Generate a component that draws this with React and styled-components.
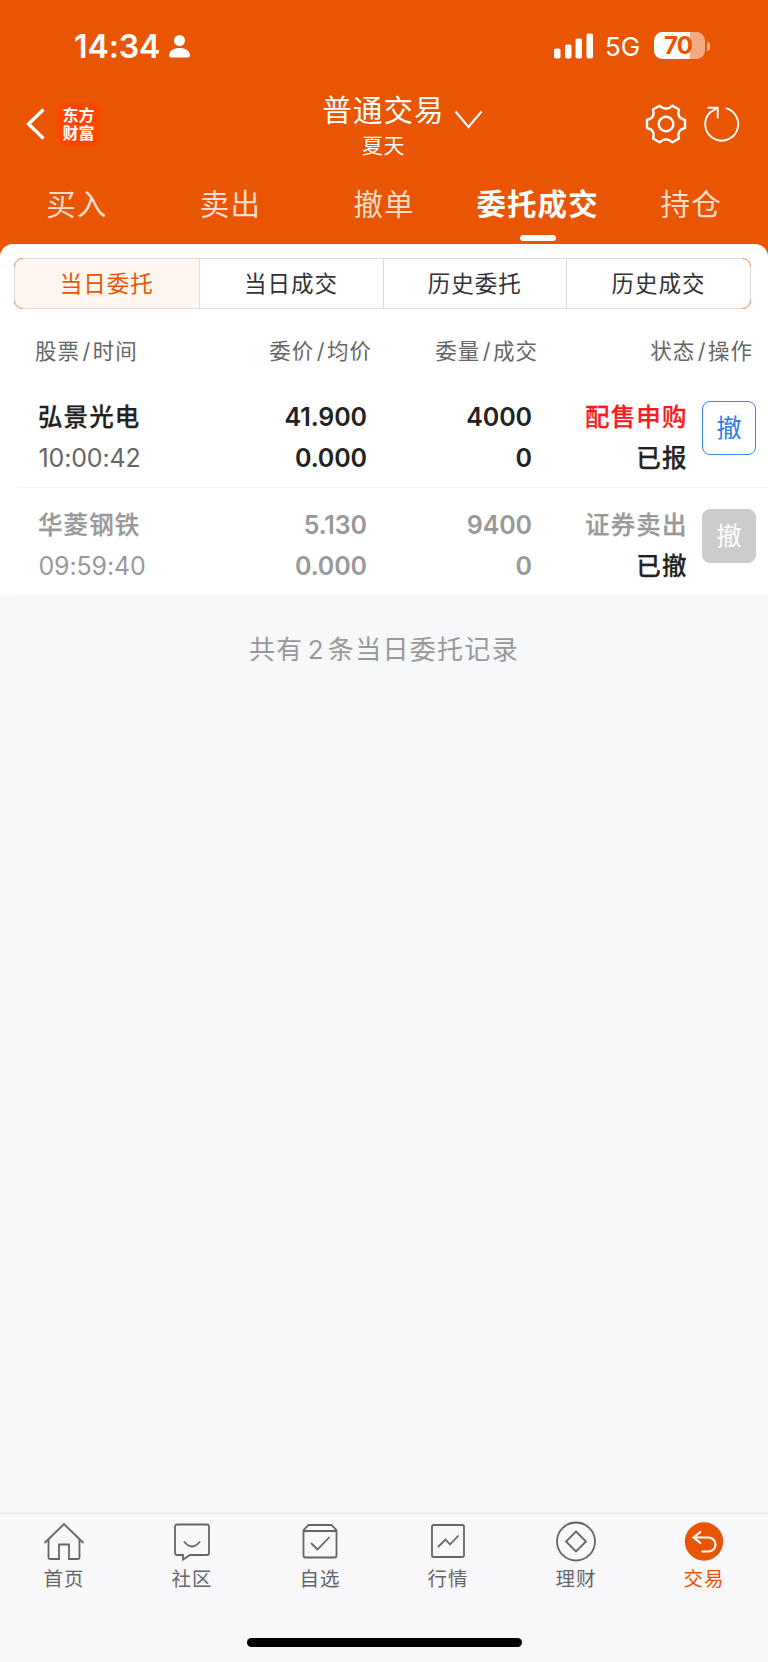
import React from "react";
import styled, { createGlobalStyle } from "styled-components";

const ORANGE = "#ea5504";

const GlobalStyle = createGlobalStyle`
  * { box-sizing: border-box; }
  body {
    margin: 0;
    background: #f7f8fa;
    font-family: Inter, "Noto Sans CJK SC", sans-serif;
  }
`;

const Screen = styled.div`
  width: 768px;
  height: 1662px;
  display: flex;
  flex-direction: column;
  overflow: hidden;
  white-space: nowrap;
  background: #f7f8fa;
`;

const Header = styled.header`
  height: 256px;
  flex: none;
  background: ${ORANGE};
  color: #fff;
`;

const StatusBar = styled.div`
  height: 92px;
  padding: 0 58px 0 74px;
  display: flex;
  align-items: center;
  justify-content: space-between;
`;

const StatusGroup = styled.div`
  display: flex;
  align-items: center;
`;

const Clock = styled.span`
  width: 95px;
  font-size: 32px;
  font-weight: 600;
  line-height: 40px;
  letter-spacing: -0.1px;
  padding-top: 1px;
`;

const Network = styled.span`
  width: 49px;
  margin-left: 11px;
  font-size: 26px;
  line-height: 34px;
  padding-top: 2px;
`;

const Battery = styled.div`
  width: 51px;
  height: 27px;
  margin-top: -1px;
  border-radius: 8.5px;
  text-align: center;
  font-size: 24px;
  font-weight: 700;
  line-height: 28px;
  padding-right: 3px;
  letter-spacing: -0.8px;
  color: ${ORANGE};
  background: linear-gradient(90deg, #fff 70%, #f5aa83 70%);
`;

const BatteryTip = styled.div`
  width: 3px;
  height: 9px;
  margin-left: 2px;
  border-radius: 0 4px 4px 0;
  background: #f5aa83;
`;

const NavBar = styled.div`
  height: 69px;
  margin-top: -3px;
  padding: 0 26px 0 24px;
  display: grid;
  grid-template-columns: 1fr auto 1fr;
  grid-template-rows: 70px;
  align-items: center;
`;

const NavLeft = styled.div`
  display: flex;
  align-items: center;
  gap: 9px;
`;

const Logo = styled.div`
  width: 43px;
  height: 43px;
  padding-top: 4.5px;
  border-radius: 9px;
  background: #ff4502;
  text-align: center;
  font-size: 16px;
  font-weight: 700;
  line-height: 17.5px;
`;

const Account = styled.div`
  display: flex;
  flex-direction: column;
  align-items: center;
  align-self: start;
  padding: 2px 0 0 1px;
`;

const AccountTitle = styled.div`
  font-size: 29.5px;
  letter-spacing: 1.1px;
  line-height: 38px;
  position: relative;
  svg {
    position: absolute;
    left: 131px;
    top: 18px;
  }
`;

const AccountName = styled.div`
  font-size: 21px;
  letter-spacing: 0.6px;
  line-height: 28px;
  margin-top: 3px;
`;

const NavRight = styled.div`
  display: flex;
  justify-content: flex-end;
  align-items: center;
  gap: 15px;
`;

const Tabs = styled.nav`
  height: 86px;
  display: grid;
  grid-template-columns: repeat(5, 1fr);
`;

const Tab = styled.div`
  display: flex;
  flex-direction: column;
  align-items: center;
  padding-top: 25px;
  font-size: 29.5px;
  line-height: 42px;
  letter-spacing: 1.1px;
  font-weight: ${(p) => (p.$active ? 700 : 400)};
  color: ${(p) => (p.$active ? "#fff" : "#fbdccb")};
  &::after {
    content: "";
    width: 36px;
    height: 6px;
    margin-top: 10px;
    border-radius: 3px;
    background: ${(p) => (p.$active ? "#fff" : "transparent")};
  }
`;

const Panel = styled.section`
  height: 351px;
  flex: none;
  margin-top: -12px;
  padding-top: 14px;
  border-radius: 13px 13px 0 0;
  background: #fff;
`;

const Segments = styled.div`
  height: 51px;
  margin: 0 17px 0 14px;
  border: 1px solid #dcdce2;
  border-radius: 8px;
  display: grid;
  grid-template-columns: repeat(4, 1fr);
  position: relative;
`;

const CornerLines = styled.svg`
  position: absolute;
  left: -1px;
  top: -1px;
`;

const Segment = styled.div`
  text-align: center;
  font-size: 22.5px;
  line-height: 49px;
  letter-spacing: 1px;
  color: ${(p) => (p.$active ? ORANGE : "#333")};
  background: ${(p) => (p.$active ? "#fff5f1" : "transparent")};
  border-radius: ${(p) => (p.$active ? "7px 0 0 7px" : "0")};
  & + & {
    border-left: 1px solid #dcdce2;
  }
`;

const ColumnTitles = styled.div`
  height: 72px;
  padding: 12px 15px 0 35px;
  display: grid;
  grid-template-columns: 189px 148px 166px 1fr;
  font-size: 21.5px;
  line-height: 60px;
  letter-spacing: 1px;
  color: #666;
`;

const ColumnTitle = styled.span`
  text-align: ${(p) => (p.$first ? "left" : "right")};
  i {
    font-style: normal;
    padding: 0 1.5px 0 2.5px;
  }
`;

const Order = styled.article`
  height: 107px;
  margin-left: 18px;
  padding: 16px 12px 0 21px;
  display: grid;
  grid-template-columns: 180px 148px 165px 154px 1fr;
  border-bottom: 1px solid #f3f3f5;
  color: ${(p) => (p.$cancelled ? "#999" : "#222")};
  & + & {
    height: 108px;
    padding-top: 17px;
  }
`;

const Cell = styled.div`
  display: flex;
  flex-direction: column;
  align-items: ${(p) => (p.$left ? "flex-start" : "flex-end")};
`;

const StockName = styled.div`
  font-size: 24.5px;
  font-weight: 500;
  letter-spacing: 1.1px;
  line-height: 41px;
  -webkit-text-stroke: 0.25px currentColor;
  margin-left: -1px;
`;

const Time = styled.div`
  font-size: 25px;
  letter-spacing: -0.15px;
  line-height: 40px;
  margin-left: -0.5px;
  color: ${(p) => (p.$cancelled ? "#999" : "#666")};
`;

const Figure = styled.div`
  font-size: 25px;
  font-weight: 600;
  line-height: 41px;
  letter-spacing: -0.1px;
`;

const Status = styled(StockName)`
  margin-right: -1.5px;
  color: ${(p) => p.$color};
`;

const CancelButton = styled.button`
  justify-self: end;
  width: 54px;
  height: 54px;
  margin-top: 4px;
  padding: 0;
  border-radius: 8px;
  border: 1px solid ${(p) => (p.$disabled ? "#ccc" : "#3a87ea")};
  background: ${(p) => (p.$disabled ? "#ccc" : "#fff")};
  color: ${(p) => (p.$disabled ? "#fff" : "#2b7de5")};
  font: 400 25px/53px Inter, "Noto Sans CJK SC", sans-serif;
`;

const Summary = styled.p`
  flex: 1;
  margin: 0;
  padding-top: 34px;
  text-align: center;
  font-size: 26px;
  line-height: 42px;
  letter-spacing: 1.3px;
  color: #999;
  span {
    padding: 0 3px 0 4px;
  }
`;

const BottomBar = styled.footer`
  height: 150px;
  flex: none;
  border-top: 2px solid #ededf0;
  background: #f8f8fb;
  display: flex;
  flex-direction: column;
  align-items: center;
  justify-content: space-between;
  padding-bottom: 15px;
`;

const BottomTabs = styled.nav`
  width: 768px;
  display: grid;
  grid-template-columns: repeat(6, 1fr);
`;

const BottomTab = styled.div`
  display: flex;
  flex-direction: column;
  align-items: center;
  padding-top: 6px;
  font-size: 19.5px;
  line-height: 30px;
  letter-spacing: 1px;
  color: ${(p) => (p.$active ? ORANGE : "#666")};
  svg {
    margin-bottom: 2px;
  }
`;

const HomeIndicator = styled.div`
  width: 275px;
  height: 9px;
  border-radius: 5px;
  background: #000;
`;

const bottomIcons = {
  首页: <path d="M2.5 23 22 4 41.500 23M6.500 19.500V37.500a1.500 1.500 0 0 0 1.500 1.500H17V24.500H27V39H36a1.500 1.500 0 0 0 1.500-1.500V19.500" />,
  社区: <><path d="M7 4.500H37a2 2 0 0 1 2 2V33a2 2 0 0 1-2 2H20L13 39.500V35H7a2 2 0 0 1-2-2V6.500a2 2 0 0 1 2-2Z" /><path d="M14 21.500Q22 31.500 30 21.500" /></>,
  自选: <><path d="M5.500 10V35.500a2 2 0 0 0 2 2H36.500a2 2 0 0 0 2-2V10L33.500 5H10.500ZM5.500 11H38.500" /><path d="M13 23 19.500 29.500 31.500 17" /></>,
  行情: <><rect x="6" y="5" width="32" height="32" rx="1.500" /><path d="M12 27 19.500 19.500 24 24.500 32.500 15.500" /></>,
  理财: <><circle cx="22" cy="21.500" r="19" /><path d="M22 11.500 32 21.500 22 31.500 12 21.500Z" /></>,
  交易: <><circle cx="22" cy="21.500" r="19.200" fill={ORANGE} stroke="none" /><path stroke="#fff" strokeWidth="2.200" d="M19 11.500 11.500 17.500 19 23.500M12 17.500H26.500A6.900 6.900 0 0 1 26.500 31.500H19.500" /></>,
};

const orders = [
  { name: "弘景光电", time: "10:00:42", price: "41.900", average: "0.000", volume: "4000", filled: "0", side: "配售申购", sideColor: "#fb1a1e", state: "已报", cancelled: false },
  { name: "华菱钢铁", time: "09:59:40", price: "5.130", average: "0.000", volume: "9400", filled: "0", side: "证券卖出", sideColor: "#999", state: "已撤", cancelled: true },
];

const titles = [["股票", "时间"], ["委价", "均价"], ["委量", "成交"], ["状态", "操作"]];

export default function App() {
  return (
    <Screen>
      <GlobalStyle />
      <Header>
        <StatusBar>
          <StatusGroup>
            <Clock>14:34</Clock>
            <svg width="22" height="24" viewBox="0 0 22 24" fill="#fff">
              <circle cx="10.500" cy="6.500" r="5.500" />
              <path d="M0 21.500C0 16.500 5 14 10.500 14S21 16.500 21 21.500Q21 23.500 19 23.500H2Q0 23.500 0 21.500Z" />
            </svg>
          </StatusGroup>
          <StatusGroup>
            <svg width="40" height="26" viewBox="0 0 40 26" fill="#fff">
              <rect x="0" y="15.500" width="6.500" height="10" rx="1.800" />
              <rect x="11" y="11.500" width="6.500" height="14" rx="1.800" />
              <rect x="21.500" y="5.500" width="6.500" height="20" rx="1.800" />
              <rect x="32.500" y="0.500" width="6.500" height="25" rx="1.800" />
            </svg>
            <Network>5G</Network>
            <Battery>70</Battery>
            <BatteryTip />
          </StatusGroup>
        </StatusBar>
        <NavBar>
          <NavLeft>
            <svg width="24" height="36" viewBox="0 0 24 36" fill="none" stroke="#fff" strokeWidth="3.400">
              <path d="M19.500 3.500 4.500 18 19.500 32.500" />
            </svg>
            <Logo>东方<br />财富</Logo>
          </NavLeft>
          <Account>
            <AccountTitle>
              普通交易
              <svg width="32" height="22" viewBox="0 0 32 22" fill="none" stroke="#fff" strokeWidth="2.200">
                <path d="M2.500 2.500 15.500 18 28.500 2.500" />
              </svg>
            </AccountTitle>
            <AccountName>夏天</AccountName>
          </Account>
          <NavRight>
            <svg width="42" height="42" viewBox="-21 -21 42 42" fill="none" stroke="#fff" strokeWidth="2.400" strokeLinejoin="round">
              <path d="M19 4Q10.400 6 13 14.500L6.500 18.300Q0 12 -6.500 18.300L-13 14.500Q-10.400 6 -19 4V-4Q-10.400 -6 -13 -14.500L-6.500 -18.300Q0 -12 6.500 -18.300L13 -14.500Q10.400 -6 19 -4Z" />
              <circle r="7.300" />
            </svg>
            <svg width="40" height="40" viewBox="-20 -20 40 40" fill="none" stroke="#fff" strokeWidth="1.900">
              <path d="M3.700 -15.900A16.500 16.500 0 1 1 -12 -11.500L-4.500 -16.200M-14.500 -16.200H-4.300V-5.500" />
            </svg>
          </NavRight>
        </NavBar>
        <Tabs>
          {["买入", "卖出", "撤单", "委托成交", "持仓"].map((t) => (
            <Tab key={t} $active={t === "委托成交"}>{t}</Tab>
          ))}
        </Tabs>
      </Header>
      <Panel>
        <Segments>
          {["当日委托", "当日成交", "历史委托", "历史成交"].map((t, i) => (
            <Segment key={t} $active={i === 0}>{t}</Segment>
          ))}
          <CornerLines width="737" height="51" fill="none" stroke="#ee8c5a" strokeWidth="1">
            <path d="M0.500 8.500A8 8 0 0 1 8.500 0.500M0.500 42.500A8 8 0 0 0 8.500 50.500M728.500 0.500A8 8 0 0 1 736.500 8.500M736.500 42.500A8 8 0 0 1 728.500 50.500" />
          </CornerLines>
        </Segments>
        <ColumnTitles>
          {titles.map(([a, b], i) => (
            <ColumnTitle key={a} $first={i === 0}>{a}<i>/</i>{b}</ColumnTitle>
          ))}
        </ColumnTitles>
        {orders.map((o) => (
          <Order key={o.name} $cancelled={o.cancelled}>
            <Cell $left>
              <StockName>{o.name}</StockName>
              <Time $cancelled={o.cancelled}>{o.time}</Time>
            </Cell>
            <Cell>
              <Figure>{o.price}</Figure>
              <Figure>{o.average}</Figure>
            </Cell>
            <Cell>
              <Figure>{o.volume}</Figure>
              <Figure>{o.filled}</Figure>
            </Cell>
            <Cell>
              <Status $color={o.sideColor}>{o.side}</Status>
              <Status $color="#222">{o.state}</Status>
            </Cell>
            <CancelButton $disabled={o.cancelled}>撤</CancelButton>
          </Order>
        ))}
      </Panel>
      <Summary>共有<span>2</span>条当日委托记录</Summary>
      <BottomBar>
        <BottomTabs>
          {Object.entries(bottomIcons).map(([label, icon]) => (
            <BottomTab key={label} $active={label === "交易"}>
              <svg width="44" height="42" viewBox="0 0 44 42" fill="none" stroke="#666" strokeWidth="1.800">{icon}</svg>
              {label}
            </BottomTab>
          ))}
        </BottomTabs>
        <HomeIndicator />
      </BottomBar>
    </Screen>
  );
}
